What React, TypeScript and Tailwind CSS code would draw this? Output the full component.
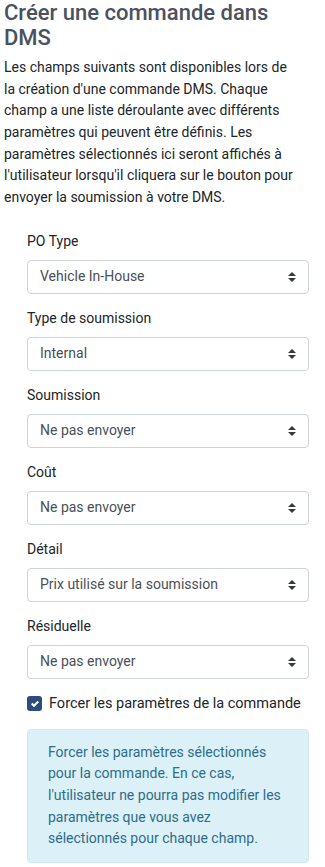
import { useState } from "react";

type Field = {
  label: string;
  value: string;
  options: string[];
};

const FIELDS: Field[] = [
  { label: "PO Type", value: "Vehicle In-House", options: ["Vehicle In-House", "Vehicle", "Other"] },
  { label: "Type de soumission", value: "Internal", options: ["Internal", "External"] },
  { label: "Soumission", value: "Ne pas envoyer", options: ["Ne pas envoyer", "Envoyer"] },
  { label: "Coût", value: "Ne pas envoyer", options: ["Ne pas envoyer", "Envoyer"] },
  { label: "Détail", value: "Prix utilisé sur la soumission", options: ["Prix utilisé sur la soumission", "Ne pas envoyer"] },
  { label: "Résiduelle", value: "Ne pas envoyer", options: ["Ne pas envoyer", "Envoyer"] },
];

function SelectField({ field }: { field: Field }) {
  const [value, setValue] = useState(field.value);

  return (
    <label className="block mb-[14px]">
      <span className="block text-[14px] leading-[21px] text-[#212529] mb-2">
        {field.label}
      </span>
      <div className="relative">
        <select
          value={value}
          onChange={(e) => setValue(e.target.value)}
          className="block w-full h-[34px] appearance-none rounded border border-[#ced4da] bg-white pl-3 pr-8 text-[14px] text-[#495057] outline-none"
        >
          {field.options.map((o) => (
            <option key={o} value={o}>
              {o}
            </option>
          ))}
        </select>
        <svg
          viewBox="0 0 4 5"
          className="pointer-events-none absolute right-[13px] top-1/2 -translate-y-1/2 w-2 h-[10px]"
        >
          <path fill="#343a40" d="M2 0L0 2h4zm0 5L0 3h4z" />
        </svg>
      </div>
    </label>
  );
}

export default function App() {
  const [forced, setForced] = useState(true);

  return (
    <div className="w-[325px] bg-white pl-1 pr-4 font-['Roboto','Liberation_Sans',sans-serif]">
      <div className="pr-[14px]">
        <h2 className="text-[22px] leading-[25px] font-medium text-[#4a5160]">
          Créer une commande dans DMS
        </h2>
        <p className="mt-[7px] text-[14px] leading-[21.67px] text-[#212529]">
          Les champs suivants sont disponibles lors de la création d'une
          commande DMS. Chaque champ a une liste déroulante avec différents
          paramètres qui peuvent être définis. Les paramètres sélectionnés ici
          seront affichés à l'utilisateur lorsqu'il cliquera sur le bouton pour
          envoyer la soumission à votre DMS.
        </p>
      </div>

      <form className="mt-[22px] ml-[23px]">
        {FIELDS.map((f) => (
          <SelectField key={f.label} field={f} />
        ))}

        <label className="flex items-center gap-[7px] mt-[1px] cursor-pointer">
          <input
            type="checkbox"
            checked={forced}
            onChange={(e) => setForced(e.target.checked)}
            className="sr-only"
          />
          <span
            className={
              forced
                ? "flex items-center justify-center w-[15px] h-[15px] rounded-[3px] bg-[#2c4c7c]"
                : "flex items-center justify-center w-[15px] h-[15px] rounded-[3px] border border-[#adb5bd] bg-white"
            }
          >
            {forced && (
              <svg viewBox="0 0 8 8" className="w-[8px] h-[8px]">
                <path fill="#fff" d="M6.564.75l-3.59 3.612-1.538-1.55L0 4.26l2.974 2.99L8 2.193z" />
              </svg>
            )}
          </span>
          <span className="text-[14.5px] leading-[22px] text-[#212529] whitespace-nowrap">
            Forcer les paramètres de la commande
          </span>
        </label>

        <div className="mt-[14px] rounded border border-[#cdeaf2] bg-[#dbf1f7] px-5 py-3 text-[14px] leading-[21.67px] text-[#2f6c8b]">
          Forcer les paramètres sélectionnés pour la commande. En ce cas,
          l'utilisateur ne pourra pas modifier les paramètres que vous avez
          sélectionnés pour chaque champ.
        </div>
      </form>
    </div>
  );
}
